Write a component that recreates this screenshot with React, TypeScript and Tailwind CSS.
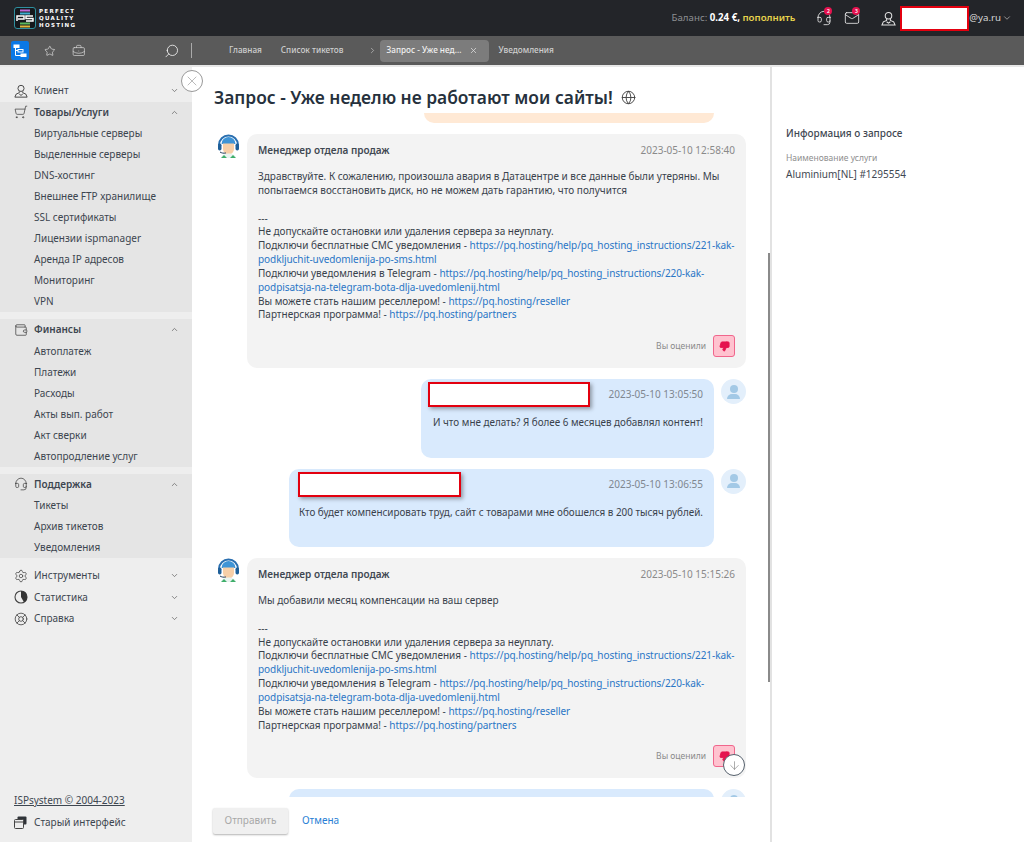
import React from 'react';
import {
  ArrowDown, BriefcaseBusiness, ChevronDown, ChevronRight, ChevronUp, Globe, Headset, LifeBuoy, Mail,
  Search, Settings, ShoppingCart, Star, ThumbsDown, Wallet, X,
} from 'lucide-react';

const font = { fontFamily: '"Noto Sans", sans-serif' };

const Logo = () => (
  <div className="flex items-center gap-[3px]">
    <svg width="22" height="22" viewBox="0 0 22 22">
      <rect x="0.5" y="0.5" width="21" height="21" rx="2.5" fill="#15181c" stroke="#2f8f9f" />
      <rect x="6" y="2.5" width="10" height="2" fill="#c06bd8" />
      <rect x="6" y="5.5" width="10" height="2" fill="#3fb0d0" />
      <rect x="6" y="15.5" width="10" height="2" fill="#5cb85c" />
      <rect x="6" y="18.5" width="10" height="2" fill="#e0b83a" />
      <path d="M3 14V9h7v3H4M19 9h-7v2.500h7V14h-7" fill="none" stroke="#fff" strokeWidth="1.500" />
    </svg>
    <div className="font-bold text-[5.5px] leading-[7px] tracking-[1.3px] text-white" style={{ fontFamily: '"DejaVu Sans", sans-serif' }}>
      <div>PERFECT</div>
      <div>QUALITY</div>
      <div>HOSTING</div>
    </div>
  </div>
);

const TreeIcon = () => (
  <svg width="14" height="14" viewBox="0 0 14 14" fill="none" stroke="#fff" strokeWidth="1">
    <rect x="1" y="1" width="5" height="2.500" fill="#fff" />
    <rect x="5" y="5.500" width="5" height="2.500" />
    <rect x="8" y="10" width="5" height="2.500" fill="#fff" />
    <path d="M2.500 3.500V11.500H8M2.500 6.500H5" />
  </svg>
);

// person on a plinth, used in the header and the sidebar
const PersonIcon = ({ size = 14, className }: { size?: number; className?: string }) => (
  <svg width={size} height={size} viewBox="0 0 16 16" fill="none" stroke="currentColor" strokeWidth="1.100" className={className}>
    <circle cx="8" cy="5" r="3.500" />
    <path d="M6 8.500v1.500L2.500 11.500 1 15h14l-1.500-3.500L10 10V8.500" />
    <path d="M6 11.500 8 13l2-1.500" />
  </svg>
);

const PieIcon = () => (
  <svg width="14" height="14" viewBox="0 0 14 14">
    <circle cx="7" cy="7" r="6" fill="none" stroke="#444" strokeWidth="1.100" />
    <path d="M7 1a6 6 0 0 1 3 11.200L7 7z" fill="#333" />
  </svg>
);

const WindowsIcon = () => (
  <svg width="13" height="13" viewBox="0 0 13 13" className="mr-[7px]">
    <rect x="3.500" y="0.500" width="9" height="8" rx="1" fill="#2f3338" />
    <rect x="0.500" y="3.500" width="9" height="9" rx="1" fill="#eee" stroke="#444" />
    <path d="M0.500 6h9" stroke="#444" />
  </svg>
);

const Header = () => (
  <header className="h-9 bg-[#232529] flex items-center pl-[14px] pr-[12px]">
    <Logo />
    <div className="ml-auto flex items-center text-[9.7px] font-semibold">
      <span className="text-[#8d8f92] font-normal">Баланс:&nbsp;</span>
      <span className="text-white font-bold">0.24 €,&nbsp;</span>
      <span className="text-[#e8d44d]">пополнить</span>
      <span className="relative ml-[21px] text-[#e4e4e4]">
        <Headset size={16} strokeWidth={1.3} />
        <span className="absolute -top-[3px] left-[8px] w-2 h-2 rounded-full bg-[#e5134f] text-white text-[5px] leading-2 text-center">2</span>
      </span>
      <span className="relative ml-[12px] text-[#e4e4e4]">
        <Mail size={16} strokeWidth={1.3} />
        <span className="absolute -top-[3px] left-[8px] w-2 h-2 rounded-full bg-[#e5134f] text-white text-[5px] leading-2 text-center">3</span>
      </span>
      <PersonIcon size={15} className="ml-[21px] text-[#e4e4e4]" />
      <div className="ml-[4px] w-[69px] h-[25px] bg-white border-2 border-[#e3000f]" />
      <span className="text-[#d8d8d8] font-normal">@ya.ru</span>
      <ChevronDown size={10} className="ml-[1px] text-[#aaa]" />
    </div>
  </header>
);

const Toolbar = () => (
  <div className="h-[29px] bg-[#5a5a5a] flex items-center text-[8.2px] font-medium text-[#cfcfcf]">
    <div className="w-[192px] flex items-center pl-[11px] shrink-0">
      <div className="w-[19px] h-[19px] rounded-[2px] bg-[#0a78e6] flex items-center justify-center"><TreeIcon /></div>
      <Star size={12} strokeWidth={1.3} className="ml-[15px] text-[#eee]" />
      <BriefcaseBusiness size={14} strokeWidth={1.2} className="ml-[16px] text-[#ddd]" />
      <Search size={16} strokeWidth={1.2} className="ml-[78px] text-white -scale-x-100" />
      <div className="ml-[12px] w-px h-[15px] bg-[#aaa]" />
    </div>
    <span className="ml-[37px]">Главная</span>
    <span className="ml-[19px]">Список тикетов</span>
    <ChevronRight size={9} className="ml-[24px] text-[#bbb]" />
    <div className="ml-[3px] w-[109px] h-[22px] rounded bg-[#7c7c7c] flex items-center pl-[7px] text-[#f0f0f0]">
      Запрос - Уже нед...
      <X size={9} className="ml-[8px] text-[#ddd]" />
    </div>
    <span className="ml-[10px]">Уведомления</span>
  </div>
);

type Group = { label: string; icon: React.ReactNode; open?: boolean; items?: string[]; cls?: string };

const groups: Group[] = [
  { label: 'Клиент', icon: <PersonIcon /> },
  {
    label: 'Товары/Услуги', icon: <ShoppingCart size={14} strokeWidth={1.3} className="-scale-x-100" />, open: true,
    items: ['Виртуальные серверы', 'Выделенные серверы', 'DNS-хостинг', 'Внешнее FTP хранилище', 'SSL сертификаты', 'Лицензии ispmanager', 'Аренда IP адресов', 'Мониторинг', 'VPN'],
  },
  {
    label: 'Финансы', icon: <Wallet size={14} strokeWidth={1.3} />, open: true, cls: 'mt-[7px]',
    items: ['Автоплатеж', 'Платежи', 'Расходы', 'Акты вып. работ', 'Акт сверки', 'Автопродление услуг'],
  },
  {
    label: 'Поддержка', icon: <Headset size={14} strokeWidth={1.3} />, open: true, cls: 'mt-[7px]',
    items: ['Тикеты', 'Архив тикетов', 'Уведомления'],
  },
  { label: 'Инструменты', icon: <Settings size={14} strokeWidth={1.3} />, cls: 'mt-[7px]' },
  { label: 'Статистика', icon: <PieIcon /> },
  { label: 'Справка', icon: <LifeBuoy size={14} strokeWidth={1.4} /> },
];

const Sidebar = () => (
  <aside className="w-[192px] shrink-0 bg-[#eeeeee] flex flex-col pt-[13px] text-[10px] text-[#3d4650]">
    {groups.map((g) => (
      <div key={g.label} className={`${g.open ? 'bg-[#e5e5e5]' : ''} ${g.cls ?? ''}`}>
        <div className="h-[21.5px] flex items-center pl-[14px] pr-[13px]">
          <span className="w-[20px] text-[#444]">{g.icon}</span>
          <span className={g.open ? 'font-semibold' : ''}>{g.label}</span>
          {g.open ? <ChevronUp size={9} className="ml-auto text-[#666]" /> : <ChevronDown size={9} className="ml-auto text-[#666]" />}
        </div>
        {g.items?.map((item) => (
          <div key={item} className="h-[21px] flex items-center pl-[34px]">{item}</div>
        ))}
      </div>
    ))}
    <div className="mt-auto pb-[9px] pl-[14px]">
      <div className="underline h-[22px] flex items-center">ISPsystem © 2004-2023</div>
      <div className="h-[22px] flex items-center">
        <WindowsIcon />
        Старый интерфейс
      </div>
    </div>
  </aside>
);

const ManagerAvatar = () => (
  <svg width="25" height="25" viewBox="0 0 25 25" className="shrink-0">
    <path d="M3 11a9.500 9.500 0 0 1 19 0" fill="none" stroke="#2a6fb0" strokeWidth="2" />
    <path d="M5.500 10a7 7 0 0 1 14 0z" fill="#3f94d6" />
    <path d="M7 9.500h11v5.500a5.500 5.500 0 0 1-11 0z" fill="#f7cfa8" />
    <rect x="2" y="9.500" width="3.500" height="7" rx="1.700" fill="#1e5f99" />
    <rect x="19.500" y="9.500" width="3.500" height="7" rx="1.700" fill="#1e5f99" />
    <path d="M4 18c1.500 1 3.500 1.500 6 1" fill="none" stroke="#1e3a5a" strokeWidth="1" />
    <path d="M5 24c.5-3 3.500-4.500 7.500-4.500S19.500 21 20 24z" fill="#e9f3f0" />
    <path d="M5 24l3-3 3 3zM20 24l-3-3-3 3z" fill="#3fae6a" />
  </svg>
);

const UserAvatar = () => (
  <div className="w-[25px] h-[25px] rounded-full bg-[#e3effb] shrink-0 flex flex-col items-center justify-center">
    <div className="w-[8px] h-[8px] rounded-full bg-[#a3c9e6]" />
    <div className="w-[13px] h-[5px] rounded-t-[5px] bg-[#a3c9e6] mt-px" />
  </div>
);

const A = ({ children }: { children: React.ReactNode }) => <span className="text-[#2a76c6] tracking-[-0.07px]">{children}</span>;

const Footer = () => (
  <>
    <div>---</div>
    <div>Не допускайте остановки или удаления сервера за неуплату.</div>
    <div>Подключи бесплатные СМС уведомления - <A>https://pq.hosting/help/pq_hosting_instructions/221-kak-</A></div>
    <div><A>podkljuchit-uvedomlenija-po-sms.html</A></div>
    <div>Подключи уведомления в Telegram - <A>https://pq.hosting/help/pq_hosting_instructions/220-kak-</A></div>
    <div><A>podpisatsja-na-telegram-bota-dlja-uvedomlenij.html</A></div>
    <div>Вы можете стать нашим реселлером! - <A>https://pq.hosting/reseller</A></div>
    <div>Партнерская программа! - <A>https://pq.hosting/partners</A></div>
  </>
);

const ManagerMessage = ({ date, h, children }: { date: string; h: string; children: React.ReactNode }) => (
  <div className="flex gap-[6px] pl-[2px]">
    <ManagerAvatar />
    <div className={`w-[499px] ${h} rounded-[10px] bg-[#f3f3f3] px-[11px] pt-[9px] flex flex-col`}>
      <div className="flex items-center justify-between h-[14px]">
        <span className="font-semibold text-[#3f4852]">Менеджер отдела продаж</span>
        <span className="text-[#8a8a8a]">{date}</span>
      </div>
      <div className="mt-[13px] leading-[13.85px] text-[#39424c] whitespace-nowrap">{children}</div>
      <div className="mt-auto mb-[11px] flex items-center justify-end">
        <span className="text-[8.5px] text-[#8a8a8a] mr-[7px]">Вы оценили</span>
        <div className="w-[22px] h-[22px] rounded-[3px] bg-[#ffc2cf] border border-[#f0668c] flex items-center justify-center">
          <ThumbsDown size={11} fill="#e5134f" stroke="#e5134f" />
        </div>
      </div>
    </div>
  </div>
);

const UserMessage = ({ date, w, box, children }: { date: string; w: string; box: string; children?: React.ReactNode }) => (
  <div className="flex justify-end gap-[7px] shrink-0">
    <div className={`${w} h-[78.5px] rounded-[10px] bg-[#d9eafd] px-[11px] pt-[3px] shrink-0`}>
      <div className="flex items-center justify-between">
        <div className={`${box} h-[25px] bg-white border-2 border-[#e3000f] shadow-[2px_2px_4px_rgba(0,0,0,0.35)]`} />
        <span className="text-[#7f8790]">{date}</span>
      </div>
      <div className="mt-[8px] text-[#39424c] text-[9.9px] leading-[14px] flex justify-end whitespace-nowrap">{children}</div>
    </div>
    <UserAvatar />
  </div>
);

const Chat = () => (
  <div className="flex-1 min-h-0 overflow-hidden flex flex-col gap-[11px] text-[10px]">
    <div className="shrink-0 ml-[210px] w-[290px] h-[10px] rounded-b-[10px] bg-[#ffe9d5]" />
    <ManagerMessage date="2023-05-10 12:58:40" h="h-[234px] shrink-0">
      <div>Здравствуйте. К сожалению, произошла авария в Датацентре и все данные были утеряны. Мы</div>
      <div>попытаемся восстановить диск, но не можем дать гарантию, что получится</div>
      <div className="h-[13.85px]" />
      <Footer />
    </ManagerMessage>
    <UserMessage date="2023-05-10 13:05:50" w="w-[293px]" box="w-[162px] -ml-[4px]">И что мне делать? Я более 6 месяцев добавлял контент!</UserMessage>
    <UserMessage date="2023-05-10 13:06:55" w="w-[425px]" box="w-[163px] -ml-[2px]">Кто будет компенсировать труд, сайт с товарами мне обошелся в 200 тысяч рублей.</UserMessage>
    <ManagerMessage date="2023-05-10 15:15:26" h="h-[220px] shrink-0">
      <div>Мы добавили месяц компенсации на ваш сервер</div>
      <div className="h-[13.85px]" />
      <Footer />
    </ManagerMessage>
    <UserMessage date="" w="w-[425px]" box="hidden" />
  </div>
);

export default function App() {
  return (
    <div className="relative w-[1024px] h-[842px] overflow-hidden flex flex-col bg-white" style={font}>
      <Header />
      <Toolbar />
      <div className="border-t-2 border-[#e8e8e8] flex flex-1 min-h-0">
        <Sidebar />
        <main className="w-[580px] shrink-0 flex flex-col pl-[22px] pr-[24px] border-r-2 border-[#e2e2e2]">
          <h1 className="h-[46px] shrink-0 flex items-center text-[17.4px] font-semibold text-[#26313d] pt-[14px]">
            Запрос - Уже неделю не работают мои сайты!
            <Globe size={15} strokeWidth={1.5} className="ml-[8px] text-[#444]" />
          </h1>
          <Chat />
          <div className="h-[45px] shrink-0 flex items-center text-[10px] pt-[2px] -ml-px">
            <button className="w-[75px] h-[26px] rounded-[2px] bg-[#f0f0f0] text-[#a8a8a8] shadow-[0_1px_2px_rgba(0,0,0,0.3)]">Отправить</button>
            <span className="ml-[14px] text-[#2a7fd5]">Отмена</span>
          </div>
        </main>
        <aside className="flex-1 pl-[14px] pt-[59px] text-[#3f4852]">
          <div className="text-[10px] font-medium leading-[14px]">Информация о запросе</div>
          <div className="mt-[12px] text-[8.5px] text-[#8f8f8f] leading-[12px]">Наименование услуги</div>
          <div className="mt-[3px] text-[10px] leading-[14px]">Aluminium[NL] #1295554</div>
        </aside>
      </div>
      <div className="absolute left-[181px] top-[70px] w-[22px] h-[22px] rounded-full border border-[#999] bg-white flex items-center justify-center">
        <X size={16} strokeWidth={1} className="text-[#999]" />
      </div>
      <div className="absolute left-[723px] top-[754px] w-[22px] h-[22px] rounded-full border border-[#55606c] bg-white flex items-center justify-center">
        <ArrowDown size={13} strokeWidth={1} className="text-[#666]" />
      </div>
      <div className="absolute left-[768px] top-[253px] w-[2px] h-[429px] bg-[#8a8a8a]" />
    </div>
  );
}
